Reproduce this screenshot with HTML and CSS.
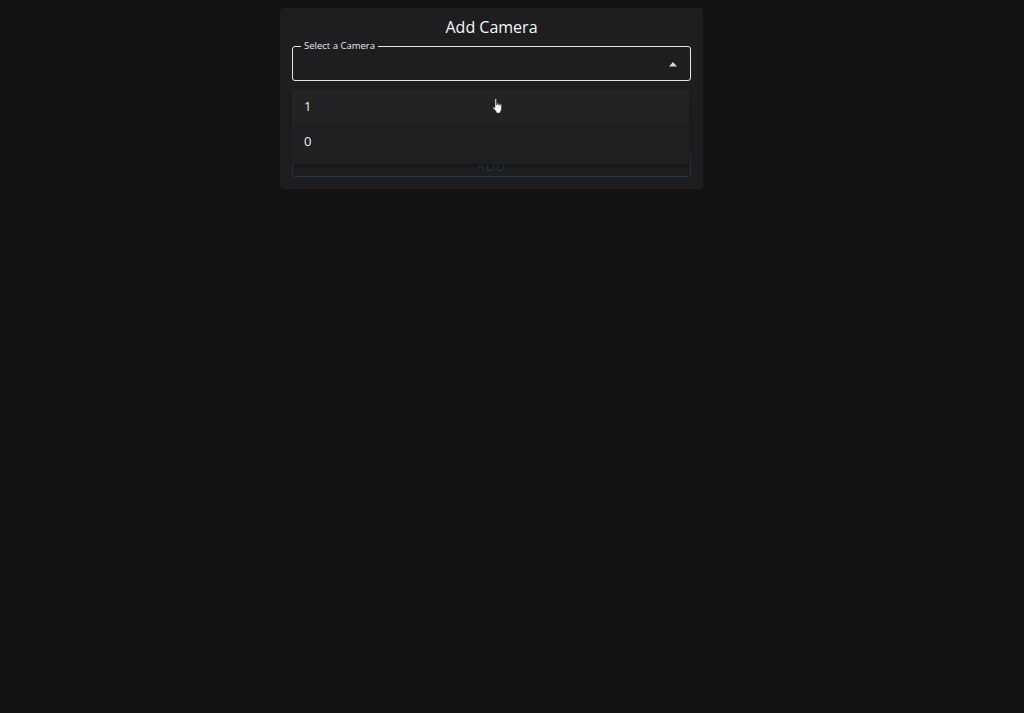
FILE: index.html
```html
<!DOCTYPE html>
<html>
<head>
<meta charset="utf-8">
<link rel="stylesheet" href="styles.css">
</head>
<body>
<div class="dialog">
  <h1 class="title">Add Camera</h1>
  <div class="field">
    <span class="label">Select a Camera</span>
    <svg class="arrow" width="10" height="6" viewBox="0 0 10 6"><path d="M1 5.5 L5 1 L9 5.5 Z" fill="#d8d8d8"/></svg>
  </div>
  <div class="spacer"></div>
  <button class="add">ADD</button>
  <ul class="menu">
    <li class="item hover">1</li>
    <li class="item">0</li>
  </ul>
  <svg class="cursor" width="12" height="16" viewBox="0 0 12 16"><path d="M3 1.2c0-.7 1.4-.7 1.4 0V7l.4-.1V5.6c0-.6 1.3-.6 1.3 0V7l.4 0V6.2c0-.6 1.3-.6 1.3 0V7.4l.3 0V6.8c0-.6 1.3-.6 1.3 0v3.8c0 1.6-.6 2.500-1.3 3.4V15H4.4v-1.1L1.2 10c-.5-.7.3-1.5 1-.9L3 10Z" fill="#fff" stroke="#333" stroke-width=".5"/></svg>
</div>
</body>
</html>
```
FILE: styles.css
```css
html, body {
  margin: 0;
  padding: 0;
  background: #121114;
  height: 100%;
}
body {
  font-family: "Open Sans", "Noto Sans", sans-serif;
  color: #fff;
}
.dialog {
  position: relative;
  box-sizing: border-box;
  margin: 8px 0 0 280px;
  width: 423px;
  height: 181px;
  background: #1e1d20;
  border-radius: 4px;
  padding: 8px 12px 12px;
  display: flex;
  flex-direction: column;
}
.title {
  margin: 0;
  font-weight: 400;
  font-size: 16px;
  line-height: 22px;
  text-align: center;
  color: #f7f7f7;
}
.field {
  position: relative;
  margin-top: 8px;
  height: 35px;
  box-sizing: border-box;
  border: 1.5px solid #e6e6e6;
  border-radius: 3px;
}
.label {
  position: absolute;
  left: 8px;
  top: -8px;
  padding: 0 3px;
  background: #1e1d20;
  font-size: 9.5px;
  line-height: 14px;
  color: #e8e8e8;
}
.arrow {
  position: absolute;
  right: 12px;
  top: 14px;
}
.spacer {
  flex: 1;
}
.add {
  height: 26px;
  padding-top: 4px;
  background: transparent;
  border: 1px solid #233644;
  border-radius: 3px;
  color: #22384a;
  font-family: inherit;
  font-size: 13px;
  letter-spacing: 1px;
}
.menu {
  position: absolute;
  left: 12px;
  top: 82px;
  width: 397px;
  height: 74px;
  margin: 0;
  padding: 0;
  list-style: none;
  background: #201f22;
  border-radius: 3px;
  box-shadow: 0 3px 6px rgba(0,0,0,0.3);
}
.item {
  height: 35px;
  line-height: 37px;
  padding-left: 12px;
  font-size: 13px;
  color: #f0f0f0;
}
.item.hover {
  background: #232225;
  height: 33px;
  line-height: 33px;
}
.cursor {
  position: absolute;
  left: 212px;
  top: 90px;
}
```
